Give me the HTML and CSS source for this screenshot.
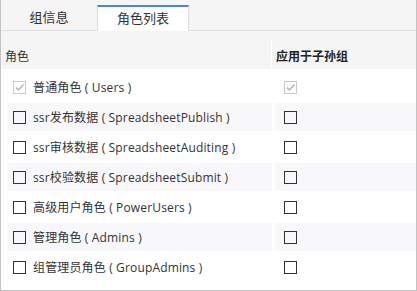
FILE: index.html
```html
<!DOCTYPE html>
<html lang="zh-CN">
<head>
    <meta charset="UTF-8">
    <title>角色列表</title>
    <link rel="stylesheet" href="styles.css">
</head>
<body>
    <div class="panel">
        <div class="tabs">
            <div class="tab">组信息</div>
            <div class="tab active">角色列表</div>
        </div>
        <div class="head">
            <div class="th th-role">角色</div>
            <div class="th th-sub">应用于子孙组</div>
        </div>
        <div class="rows">
            <div class="row">
                <div class="cell"><span class="box checked"><svg width="11" height="11" viewBox="0 0 11 11"><path d="M2 5.5 L4.5 8 L9.5 2.5" fill="none" stroke="#a9a9a9" stroke-width="1.2"/></svg></span><span>普通角色 ( Users )</span></div>
                <div class="cell sub"><span class="box checked"><svg width="11" height="11" viewBox="0 0 11 11"><path d="M2 5.5 L4.5 8 L9.5 2.5" fill="none" stroke="#a9a9a9" stroke-width="1.2"/></svg></span></div>
            </div>
            <div class="row">
                <div class="cell"><span class="box"></span><span>ssr发布数据 ( SpreadsheetPublish )</span></div>
                <div class="cell sub"><span class="box"></span></div>
            </div>
            <div class="row">
                <div class="cell"><span class="box"></span><span>ssr审核数据 ( SpreadsheetAuditing )</span></div>
                <div class="cell sub"><span class="box"></span></div>
            </div>
            <div class="row">
                <div class="cell"><span class="box"></span><span>ssr校验数据 ( SpreadsheetSubmit )</span></div>
                <div class="cell sub"><span class="box"></span></div>
            </div>
            <div class="row">
                <div class="cell"><span class="box"></span><span>高级用户角色 ( PowerUsers )</span></div>
                <div class="cell sub"><span class="box"></span></div>
            </div>
            <div class="row">
                <div class="cell"><span class="box"></span><span>管理角色 ( Admins )</span></div>
                <div class="cell sub"><span class="box"></span></div>
            </div>
            <div class="row">
                <div class="cell"><span class="box"></span><span>组管理员角色 ( GroupAdmins )</span></div>
                <div class="cell sub"><span class="box"></span></div>
            </div>
        </div>
    </div>
</body>
</html>
```

FILE: styles.css
```css
body{
    margin: 0;
    font-family: "Open Sans", "Noto Sans CJK SC", sans-serif;
    font-size: 12px;
    color: #333;
}
.panel{
    box-sizing: border-box;
    width: 417px;
    height: 291px;
    border: 1px solid #c3c3c3;
    border-top: none;
    background: white;
}
.tabs{
    display: flex;
    align-items: flex-end;
    height: 30px;
    background: #f5f5f5;
    border-bottom: 1px solid #e1e1e1;
}
.tab{
    width: 96px;
    height: 24px;
    line-height: 22px;
    text-align: center;
    font-size: 13px;
    color: #333;
}
.tab.active{
    box-sizing: border-box;
    width: 92px;
    height: 26px;
    margin-bottom: -1px;
    background: white;
    border-top: 2px solid #4a86c8;
    border-left: 1px solid #dcdcdc;
    border-right: 1px solid #dcdcdc;
}
.head{
    display: grid;
    grid-template-columns: 271px 1fr;
    height: 38px;
    padding-top: 10px;
    box-sizing: border-box;
    background: #f5f5f5;
}
.th{
    box-sizing: border-box;
    height: 28px;
    padding: 7px 4px 0;
    line-height: 18px;
}
.th-role{
    border-right: 1px solid white;
}
.th-sub{
    font-weight: bold;
    color: #222;
}
.rows{
    display: flex;
    flex-direction: column;
    gap: 2px;
    padding: 4px 0 0 7px;
}
.row{
    display: grid;
    grid-template-columns: 264px 1fr;
    column-gap: 3px;
}
.row:nth-child(even) .cell{
    background: #f8f8fa;
}
.cell{
    display: flex;
    align-items: center;
    gap: 7px;
    height: 28px;
    padding-left: 5px;
    white-space: nowrap;
    letter-spacing: 0.15px;
}
.cell.sub{
    padding-left: 9px;
}
.box{
    box-sizing: border-box;
    display: flex;
    align-items: center;
    justify-content: center;
    width: 13px;
    height: 13px;
    border: 1px solid #333;
    flex: none;
}
.box.checked{
    border-color: #c8c8c8;
}
```
